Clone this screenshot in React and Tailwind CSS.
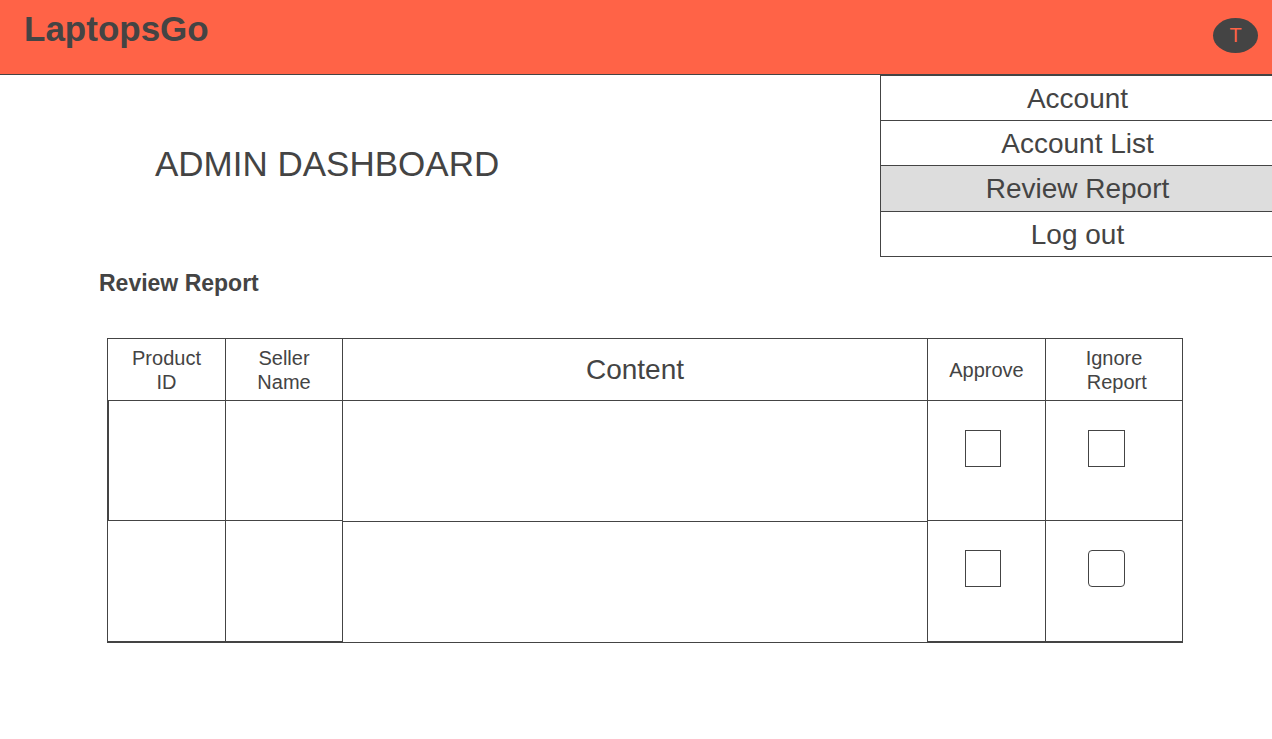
import React from "react";

const menuItems = [
  { label: "Account", height: "h-[45px]" },
  { label: "Account List", height: "h-[45px]" },
  { label: "Review Report", height: "h-[46px]", active: true },
  { label: "Log out", height: "h-[45px]" },
];

const box =
  "block h-[37px] appearance-none border border-[#444444] bg-white checked:bg-[#444444]";

function Header() {
  return (
    <header className="flex h-[75px] items-start justify-between border-b border-[#444444] bg-[#ff6347] pl-6 pr-[14px]">
      <a href="#home" className="pt-2 text-[35px] leading-[42px] font-bold">
        LaptopsGo
      </a>
      <button
        type="button"
        className="mt-[18px] flex h-[35px] w-[45px] items-center justify-center rounded-[50%] bg-[#444444] pb-0.5 text-[20px] leading-[24px] text-[#ff6347]"
      >
        T
      </button>
    </header>
  );
}

function Menu() {
  return (
    <nav className="w-[392px] shrink-0 border-t border-l border-[#444444]">
      <ul>
        {menuItems.map((item) => (
          <li key={item.label}>
            <a
              href="#menu"
              aria-current={item.active ? "page" : undefined}
              className={`flex items-center justify-center border-b border-[#444444] pt-px pl-0.5 text-[28px] leading-[32px] ${item.height} ${
                item.active ? "bg-[#dddddd]" : "bg-white"
              }`}
            >
              {item.label}
            </a>
          </li>
        ))}
      </ul>
    </nav>
  );
}

function ReportTable() {
  return (
    <table className="w-full table-fixed border-separate border-spacing-0 border-t border-l border-[#444444]">
      <colgroup>
        <col className="w-[118px]" />
        <col className="w-[117px]" />
        <col />
        <col className="w-[118px]" />
        <col className="w-[137px]" />
      </colgroup>
      <thead>
        <tr className="h-[62px] text-[20px] leading-[24px] *:border-r *:border-b *:border-[#444444] *:p-0 *:font-normal">
          <th scope="col">
            Product
            <br />
            ID
          </th>
          <th scope="col">
            Seller
            <br />
            Name
          </th>
          <th scope="col" className="text-[28px] leading-[32px]">
            Content
          </th>
          <th scope="col">Approve</th>
          <th scope="col">
            Ignore
            <br />
            &nbsp;Report
          </th>
        </tr>
      </thead>
      <tbody>
        <tr className="h-[120px] align-top *:border-r *:border-[#444444] *:p-0">
          <td className="border-b border-l" />
          <td className="border-b" />
          <td />
          <td className="border-b">
            <input type="checkbox" aria-label="Approve report 1" className={`${box} mt-[29px] ml-[37px] w-[36px]`} />
          </td>
          <td className="border-b">
            <input type="checkbox" aria-label="Ignore report 1" className={`${box} mt-[29px] ml-[42px] w-[37px]`} />
          </td>
        </tr>
        <tr className="h-[122px] align-top *:border-r *:border-[#444444] *:p-0">
          <td className="border-b-2" />
          <td className="border-b-2" />
          <td className="border-t border-b" />
          <td className="border-b-2">
            <input type="checkbox" aria-label="Approve report 2" className={`${box} mt-[29px] ml-[37px] w-[36px]`} />
          </td>
          <td className="border-b-2">
            <input type="checkbox" aria-label="Ignore report 2" className={`${box} mt-[29px] ml-[42px] w-[37px] rounded`} />
          </td>
        </tr>
      </tbody>
    </table>
  );
}

export default function App() {
  return (
    <div className="min-h-screen bg-white font-['Liberation_Sans',Arial,sans-serif] text-[#444444]">
      <Header />
      <div className="flex items-start justify-between">
        <h1 className="pt-[68px] pl-[155px] text-[35px] leading-[42px]">ADMIN DASHBOARD</h1>
        <Menu />
      </div>
      <main className="pr-[89px] pb-8">
        <h2 className="pt-3 pl-[99px] text-[23px] leading-[28px] font-bold">Review Report</h2>
        <div className="mt-[41px] ml-[107px]">
          <ReportTable />
        </div>
      </main>
    </div>
  );
}
